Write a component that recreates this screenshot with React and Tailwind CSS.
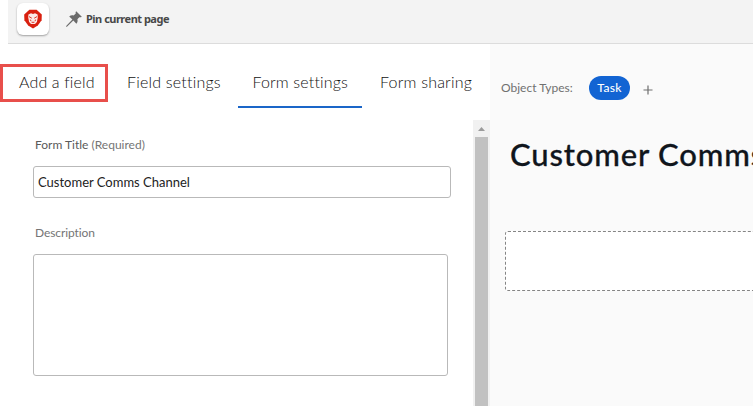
const tabs = [
  { label: "Field settings", box: "w-[94px] ml-[19px] border-transparent tracking-[0.2px]" },
  { label: "Form settings", box: "w-[124px] ml-[17px] pl-[14.5px] border-[#1a66c8] tracking-[0.14px]" },
  { label: "Form sharing", box: "w-[94px] ml-[18px] border-transparent tracking-[0.2px]" },
];

function BrandMark() {
  return (
    <svg className="h-[20px] w-[20px]" viewBox="0 0 20 20">
      <path d="M6.4 .8h7.2L18.8 5.6l-.2 5.6-3.8 5.2L10 19.4l-4.8-3L1.4 11.2 1.2 5.6z" fill="#d9200f" />
      <path d="M5.4 5.4 8 4.2 10 5l2-.8 2.6 1.2.2 3-.9 4.6-1.9 2H8l-1.9-2-.9-4.6z" fill="#fbe9e6" />
      <path
        d="M6 7.6 8.8 9.2M14 7.6l-2.8 1.6M8.6 13.3h2.8M7.4 10.6l.6 1.6M12.6 10.6l-.6 1.6"
        fill="none"
        stroke="#d9200f"
        strokeWidth="0.9"
      />
    </svg>
  );
}

function PinIcon() {
  return (
    <svg className="h-[16px] w-[16px]" viewBox="0 0 16 16" fill="#6b6b6b">
      <path d="M10.2.2 15.8 5.7c-.8.7-1.7.8-2.5.5L11.4 8.3c.5 1.8.1 3.3-1 4.4L7.3 9.6 1.2 15.5 0 15.9l.4-1.2 6-6.1L3.2 5.5c1.2-1.1 2.7-1.4 4.4-1l2.2-1.9c-.4-.8-.2-1.7.4-2.4z" />
    </svg>
  );
}

export default function App() {
  return (
    <div className="h-[406px] w-[753px] overflow-hidden bg-white font-['Lato',sans-serif]">
      <header className="ml-2 flex h-11 items-start border-b border-[#dcdcdc] bg-[#f3f3f3] pl-[9px] pt-[3px]">
        <div className="flex h-8 w-8 items-center justify-center rounded-[6px] bg-white shadow-[0_1px_2px_rgba(0,0,0,0.35)]">
          <BrandMark />
        </div>
        <div className="ml-[17px] mt-2 flex items-center">
          <PinIcon />
          <span className="ml-[4px] whitespace-nowrap font-['Noto_Sans',sans-serif] text-[11px] font-bold leading-4 tracking-[-0.5px] text-[#484848]">
            Pin current page
          </span>
        </div>
      </header>

      <div className="flex h-[362px]">
        <section className="w-[490px] shrink-0 bg-white">
          <nav className="flex h-[76px] items-start pt-[20px] text-[16px] font-light text-[#111]">
            <button className="h-[38px] w-[108px] whitespace-nowrap border-[3px] border-[#e84f4b] pl-[16px] text-left leading-[30px] tracking-[0.14px]">
              <span className="block h-8">Add a field</span>
            </button>
            {tabs.map((tab) => (
              <button
                key={tab.label}
                className={`h-[44px] whitespace-nowrap border-b-2 pt-[3px] text-left leading-[30px] ${tab.box}`}
              >
                <span className="block h-[39px]">{tab.label}</span>
              </button>
            ))}
          </nav>

          <div className="flex h-[286px]">
            <form className="w-[473px] pl-[33px] pt-[17px]">
              <label className="block pl-[2px] text-[12px] leading-4 text-[#5a5a5a]">
                Form Title <span className="text-[#757575]">(Required)</span>
              </label>
              <div className="mt-[13px] h-8 w-[418px] whitespace-nowrap rounded-[3px] border border-[#b9b9b9] pl-[4px] text-[13px] leading-[31px] text-[#222]">
                Customer Comms Channel
              </div>
              <label className="mt-[27px] block pl-[2px] text-[12px] leading-4 tracking-[-0.1px] text-[#757575]">
                Description
              </label>
              <div className="mt-[13px] h-[122px] w-[415px] rounded-[3px] border border-[#b9b9b9]" />
            </form>
            <div className="flex w-[17px] flex-col items-center bg-[#f1f1f1]">
              <div className="flex h-[17px] items-center justify-center">
                <svg className="h-[4px] w-[7px]" viewBox="0 0 7 4">
                  <path d="M3.5 0 7 4H0z" fill="#9b9b9b" />
                </svg>
              </div>
              <div className="mr-px w-[13px] grow bg-[#c1c1c1]" />
            </div>
          </div>
        </section>

        <main className="w-[263px] shrink-0 overflow-hidden bg-[#fafafa]">
          <div className="mt-8 flex h-6 items-center pl-[11px]">
            <span className="w-[88px] whitespace-nowrap text-[12px] text-[#707070]">Object Types:</span>
            <span className="flex h-6 w-[41px] items-center justify-center rounded-full bg-[#1264d3] text-[12px] font-medium tracking-[0.3px] text-white">
              Task
            </span>
            <svg className="ml-[13px] mt-[3px] h-[10px] w-[10px]" viewBox="0 0 10 10">
              <path d="M5 .5v9M.5 5h9" stroke="#6e6e6e" strokeWidth="1.2" />
            </svg>
          </div>
          <h1 className="mt-[34px] whitespace-nowrap pl-[20px] text-[31px] font-medium leading-[40px] tracking-[0.84px] text-[#10151c] [-webkit-text-stroke:0.3px_#10151c]">
            Customer Comms
          </h1>
          <div className="ml-[15px] mt-[57px] h-[60px] w-[600px] rounded-[3px] border border-dashed border-[#858585] bg-white" />
        </main>
      </div>
    </div>
  );
}
